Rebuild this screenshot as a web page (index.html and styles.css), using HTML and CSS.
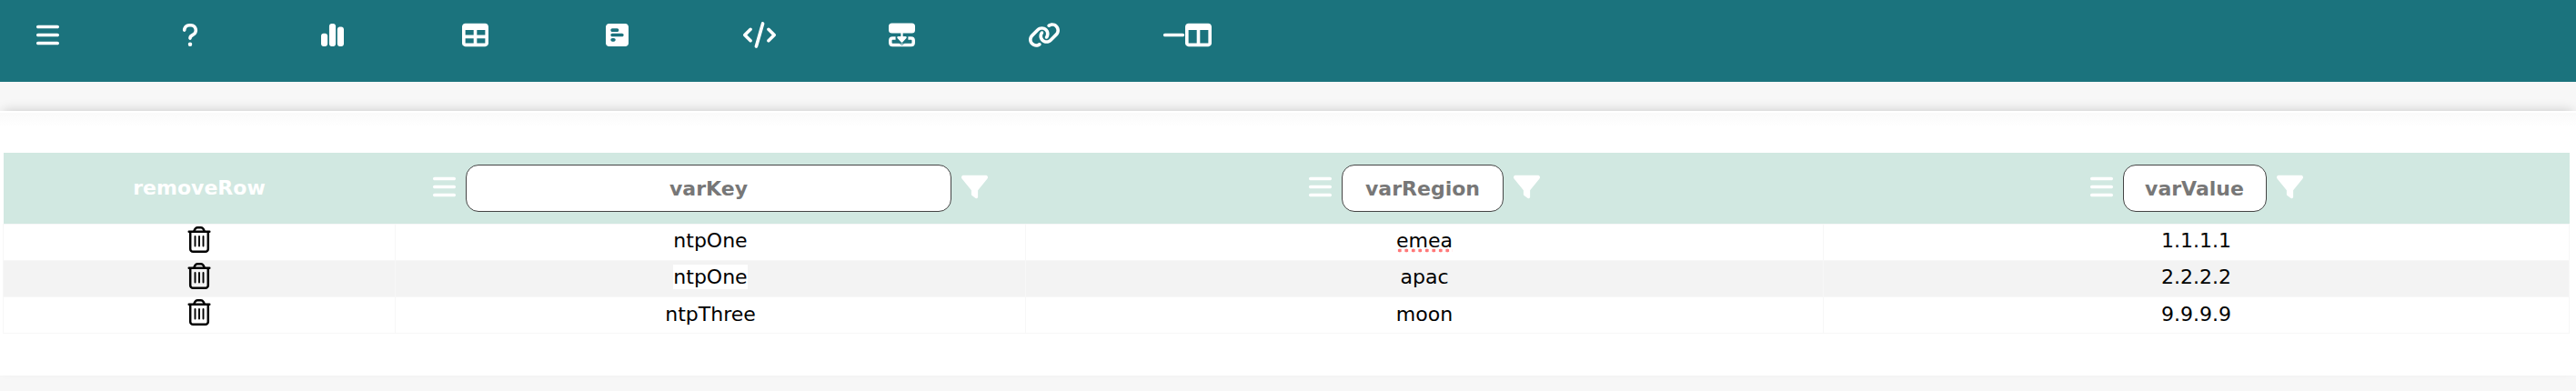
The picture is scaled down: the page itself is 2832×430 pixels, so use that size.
FILE: index.html
```html
<!DOCTYPE html>
<html lang="en">
<head>
<meta charset="utf-8">
<title>Variables</title>
<link rel="stylesheet" href="styles.css">
</head>
<body>
<svg class="defs" width="0" height="0">
  <symbol id="bars" viewBox="0 0 448 512"><path d="M0 96C0 78.300 14.300 64 32 64H416c17.700 0 32 14.300 32 32s-14.300 32-32 32H32C14.300 128 0 113.700 0 96zM0 256c0-17.700 14.300-32 32-32H416c17.700 0 32 14.300 32 32s-14.300 32-32 32H32c-17.700 0-32-14.300-32-32zM448 416c0 17.700-14.300 32-32 32H32c-17.700 0-32-14.300-32-32s14.300-32 32-32H416c17.700 0 32 14.300 32 32z"/></symbol>
  <symbol id="filter" viewBox="0 0 512 512"><path d="M3.900 54.900C10.500 40.900 24.500 32 40 32H472c15.500 0 29.500 8.900 36.100 22.900s4.600 30.500-5.200 42.500L320 320.900V448c0 12.100-6.800 23.200-17.700 28.600s-23.800 4.300-33.500-3l-64-48c-8.100-6-12.800-15.500-12.800-25.600V320.900L9 97.300C-.700 85.400-2.800 68.800 3.900 54.900z"/></symbol>
  <symbol id="trash" viewBox="0 0 26 30"><g fill="none" stroke="#000" stroke-linecap="round"><path stroke-width="2.500" d="M1.700 6.800H24.300M3.200 7.500V25.700a3 3 0 0 0 3 3H19.800a3 3 0 0 0 3-3V7.500M7.300 6 8.600 3.600Q9.500 2.200 11 2.200H15Q16.500 2.200 17.400 3.600L18.700 6"/><path stroke-width="1.900" d="M8.500 12V22.600M13 12V22.600M17.500 12V22.600"/></g></symbol>
</svg>
<nav class="nav">
  <a class="item"><svg class="w25"><use href="#bars"/></svg></a>
  <a class="item"><svg class="w18" viewBox="0 0 320 512"><path d="M80 160c0-35.300 28.700-64 64-64h32c35.300 0 64 28.700 64 64v3.600c0 21.800-11.100 42.100-29.400 53.800l-42.200 27.100c-25.200 16.200-40.400 44.100-40.400 74V320c0 17.700 14.300 32 32 32s32-14.300 32-32v-1.400c0-8.200 4.200-15.800 11-20.200l42.200-27.100c36.600-23.600 58.800-64.100 58.800-107.700V160c0-70.700-57.300-128-128-128H144C73.300 32 16 89.300 16 160c0 17.700 14.300 32 32 32s32-14.300 32-32zm80 320a40 40 0 1 0 0-80 40 40 0 1 0 0 80z"/></svg></a>
  <a class="item"><svg class="w25" viewBox="0 0 448 512"><path d="M160 80c0-26.500 21.500-48 48-48h32c26.500 0 48 21.500 48 48V432c0 26.500-21.500 48-48 48H208c-26.500 0-48-21.500-48-48V80zM0 272c0-26.500 21.500-48 48-48H80c26.500 0 48 21.500 48 48V432c0 26.500-21.500 48-48 48H48c-26.500 0-48-21.500-48-48V272zM368 96h32c26.500 0 48 21.500 48 48V432c0 26.500-21.500 48-48 48H368c-26.500 0-48-21.500-48-48V144c0-26.500 21.500-48 48-48z"/></svg></a>
  <a class="item"><svg class="w29" viewBox="0 0 512 512"><path d="M64 256V160H224v96H64zm0 64H224v96H64V320zm224 96V320H448v96H288zM448 256H288V160H448v96zM64 32C28.700 32 0 60.700 0 96V416c0 35.300 28.700 64 64 64H448c35.300 0 64-28.700 64-64V96c0-35.300-28.700-64-64-64H64z"/></svg></a>
  <a class="item"><svg class="w25" viewBox="0 0 448 512"><path d="M448 96c0-35.300-28.700-64-64-64H64C28.700 32 0 60.700 0 96V416c0 35.300 28.700 64 64 64H384c35.300 0 64-28.700 64-64V96zM256 160c0 17.700-14.300 32-32 32H128c-17.700 0-32-14.300-32-32s14.300-32 32-32h96c17.700 0 32 14.300 32 32zm64 64c17.700 0 32 14.300 32 32s-14.300 32-32 32H128c-17.700 0-32-14.300-32-32s14.300-32 32-32H320zM192 352c0 17.700-14.300 32-32 32H128c-17.700 0-32-14.300-32-32s14.300-32 32-32h32c17.700 0 32 14.300 32 32z"/></svg></a>
  <a class="item"><svg class="w36" viewBox="0 0 640 512"><path d="M392.800 1.200c-17-4.900-34.700 5-39.600 22l-128 448c-4.900 17 5 34.700 22 39.600s34.700-5 39.600-22l128-448c4.900-17-5-34.700-22-39.600zm80.600 120.100c-12.500 12.500-12.500 32.800 0 45.300L562.700 256l-89.400 89.400c-12.500 12.500-12.500 32.800 0 45.300s32.800 12.500 45.300 0l112-112c12.500-12.500 12.500-32.800 0-45.300l-112-112c-12.500-12.500-32.800-12.500-45.300 0zm-306.700 0c-12.500-12.500-32.800-12.500-45.300 0l-112 112c-12.500 12.500-12.500 32.800 0 45.300l112 112c12.500 12.500 32.800 12.500 45.300 0s12.500-32.800 0-45.300L77.300 256l89.400-89.400c12.500-12.500 12.500-32.800 0-45.300z"/></svg></a>
  <a class="item"><svg class="w29" viewBox="0 0 29 29"><rect y="1.500" width="29" height="11" rx="3.500"/><path d="M13.400 12h2.200v4h2.900c1.200 0 1.700 1.200.9 2l-4.200 4.500c-.4.400-1 .4-1.400 0L9.600 18c-.8-.8-.3-2 .9-2h2.900z"/><path fill="none" stroke="#fff" stroke-width="3.500" stroke-linecap="butt" d="M7.600 18H4.300c-1.600 0-2.500.9-2.500 2.500v2.500c0 1.600.9 2.500 2.500 2.500h20.400c1.600 0 2.500-.9 2.500-2.500v-2.500c0-1.600-.9-2.500-2.500-2.500h-3.300"/><path fill="none" stroke="#1b737d" stroke-width="1" d="M11 22.300l2.600 2.600q.9.800 1.800 0l2.600-2.600"/></svg></a>
  <a class="item"><svg class="w36" viewBox="0 0 640 512"><path d="M579.800 267.700c56.500-56.500 56.500-148 0-204.500c-50-50-128.800-56.500-186.300-15.400l-1.600 1.100c-14.400 10.300-17.700 30.300-7.400 44.600s30.300 17.700 44.600 7.400l1.600-1.100c32.100-22.900 76-19.300 103.800 8.600c31.500 31.500 31.500 82.500 0 114L422.300 334.800c-31.500 31.500-82.500 31.500-114 0c-27.900-27.900-31.500-71.800-8.600-103.800l1.100-1.600c10.300-14.400 6.900-34.400-7.400-44.600s-34.400-6.900-44.600 7.400l-1.100 1.600C206.500 251.200 213 330 263 380c56.500 56.500 148 56.500 204.500 0L579.800 267.700zM60.200 244.300c-56.500 56.500-56.500 148 0 204.500c50 50 128.800 56.500 186.300 15.400l1.600-1.100c14.400-10.300 17.700-30.300 7.400-44.600s-30.300-17.700-44.600-7.400l-1.600 1.100c-32.100 22.900-76 19.300-103.800-8.600C74 372 74 321 105.500 289.500L217.700 177.200c31.500-31.500 82.500-31.500 114 0c27.900 27.900 31.500 71.800 8.600 103.900l-1.100 1.600c-10.300 14.400-6.900 34.400 7.400 44.600s34.400 6.900 44.600-7.400l1.100-1.600C433.500 260.800 427 182 377 132c-56.500-56.500-148-56.500-204.500 0L60.200 244.300z"/></svg></a>
  <a class="item"><svg class="w25" viewBox="0 0 448 512"><path d="M432 256c0 17.700-14.300 32-32 32H48c-17.700 0-32-14.300-32-32s14.300-32 32-32H400c17.700 0 32 14.300 32 32z"/></svg><svg class="w29" viewBox="0 0 512 512"><path d="M0 96C0 60.700 28.700 32 64 32H448c35.300 0 64 28.700 64 64V416c0 35.300-28.700 64-64 64H64c-35.300 0-64-28.700-64-64V96zm64 64V416H224V160H64zm384 0H288V416H448V160z"/></svg></a>
</nav>
<main class="panel">
  <div class="rule"></div>
  <table class="grid">
    <colgroup><col class="c1"><col class="c2"><col class="c3"><col class="c4"></colgroup>
    <thead>
      <tr>
        <th>removeRow</th>
        <th><div class="head"><svg class="w25"><use href="#bars"/></svg><span class="field wide">varKey</span><svg class="w29"><use href="#filter"/></svg></div></th>
        <th><div class="head"><svg class="w25"><use href="#bars"/></svg><span class="field mid">varRegion</span><svg class="w29"><use href="#filter"/></svg></div></th>
        <th><div class="head"><svg class="w25"><use href="#bars"/></svg><span class="field small">varValue</span><svg class="w29"><use href="#filter"/></svg></div></th>
      </tr>
    </thead>
    <tbody>
      <tr><td><svg class="trash"><use href="#trash"/></svg></td><td><span>ntpOne</span></td><td><span class="misspelt">emea</span></td><td><span>1.1.1.1</span></td></tr>
      <tr class="alt"><td><svg class="trash"><use href="#trash"/></svg></td><td><span class="lit">ntpOne</span></td><td><span>apac</span></td><td><span>2.2.2.2</span></td></tr>
      <tr><td><svg class="trash"><use href="#trash"/></svg></td><td><span>ntpThree</span></td><td><span>moon</span></td><td><span>9.9.9.9</span></td></tr>
    </tbody>
  </table>
</main>
</body>
</html>
```
FILE: styles.css
```css
* { box-sizing: border-box; }
body { margin: 0; height: 430px; overflow: hidden; background: #f7f7f7; font-family: Verdana, "DejaVu Sans", sans-serif; font-size: 22px; color: #000; }
.defs { display: none; }
svg { display: block; height: 29px; fill: #fff; flex: none; }
.w18 { width: 18px; }
.w25 { width: 25px; }
.w29 { width: 29px; }
.w36 { width: 36px; }
.nav { display: grid; grid-template-columns: repeat(9, 156.600px); height: 90px; padding-top: 24px; background: #1b737d; }
.item { display: flex; justify-content: center; padding-right: 52px; }
.panel { height: 291px; margin-top: 32px; background: #fff; box-shadow: 0 -4px 12px -4px rgba(0, 0, 0, .2); }
.rule { height: 46px; border-top: 2px solid #fff; background: linear-gradient(#fafafa, #fff 16px); }
.grid { width: 2822px; margin-left: 3px; border-collapse: collapse; table-layout: fixed; }
.c1 { width: 431px; }
.c2 { width: 693px; }
.c3 { width: 877px; }
th { height: 78px; padding: 0; background: #d1e8e1; color: #fff; font-weight: 700; }
.head { display: flex; justify-content: center; align-items: center; gap: 11px; }
.head svg { position: relative; top: -1px; }
.field { height: 52px; border: 1px solid #444; border-radius: 14px; background: #fff; color: #777; line-height: 51px; }
.wide { width: 534px; }
.mid { width: 178px; }
.small { width: 158px; }
td { height: 40.300px; padding: 0 0 3px; border: 1px solid #f7f7f7; text-align: center; line-height: 27px; }
td:first-child { padding-bottom: 7px; }
td span { display: inline-block; height: 27px; vertical-align: top; }
.alt td { background: #f3f3f3; }
.lit { background: #fff; }
.misspelt { background: radial-gradient(circle, #f77 1.700px, transparent 2.200px) 0 100% / 7.500px 5px repeat-x; }
.trash { width: 26px; height: 30px; margin: 0 auto; }
```
